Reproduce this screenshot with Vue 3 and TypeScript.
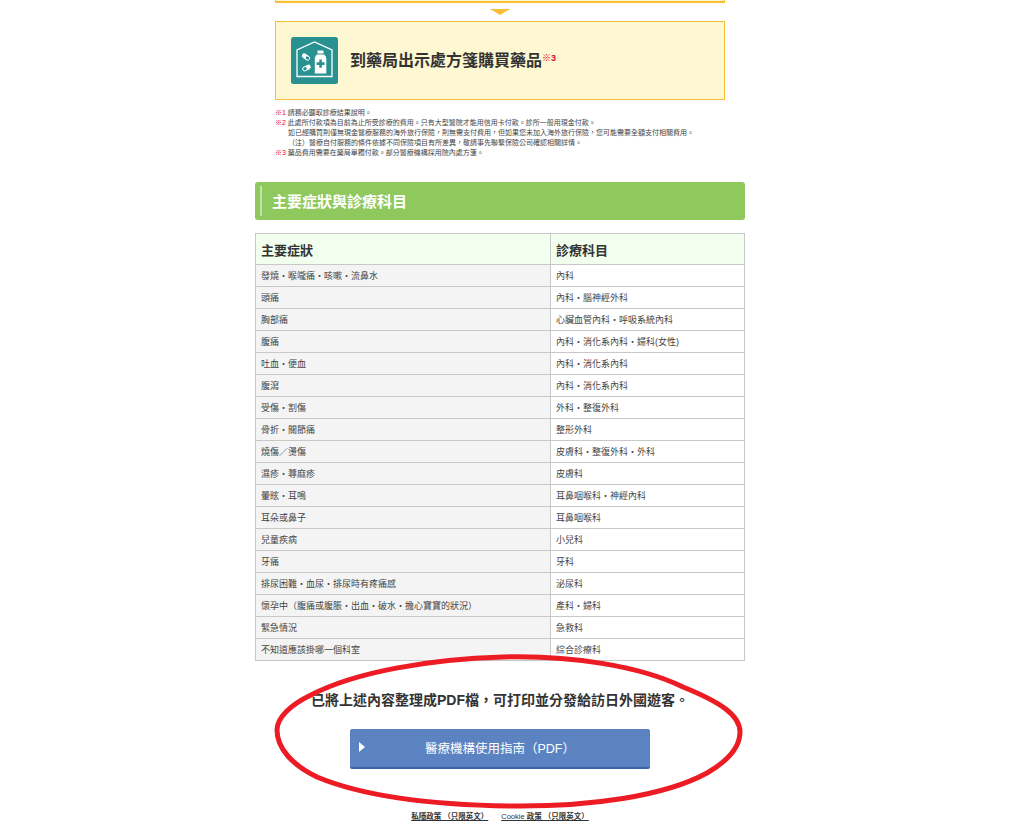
<script setup lang="ts">
interface Row { symptom: string; dept: string }
const rows: Row[] = [
  { symptom: '發燒・喉嚨痛・咳嗽・流鼻水', dept: '內科' },
  { symptom: '頭痛', dept: '內科・腦神經外科' },
  { symptom: '胸部痛', dept: '心臟血管內科・呼吸系統內科' },
  { symptom: '腹痛', dept: '內科・消化系內科・婦科(女性)' },
  { symptom: '吐血・便血', dept: '內科・消化系內科' },
  { symptom: '腹瀉', dept: '內科・消化系內科' },
  { symptom: '受傷・割傷', dept: '外科・整復外科' },
  { symptom: '骨折・關節痛', dept: '整形外科' },
  { symptom: '燒傷／燙傷', dept: '皮膚科・整復外科・外科' },
  { symptom: '濕疹・蕁麻疹', dept: '皮膚科' },
  { symptom: '暈眩・耳鳴', dept: '耳鼻咽喉科・神經內科' },
  { symptom: '耳朵或鼻子', dept: '耳鼻咽喉科' },
  { symptom: '兒童疾病', dept: '小兒科' },
  { symptom: '牙痛', dept: '牙科' },
  { symptom: '排尿困難・血尿・排尿時有疼痛感', dept: '泌尿科' },
  { symptom: '懷孕中（腹痛或腹脹・出血・破水・擔心寶寶的狀況）', dept: '產科・婦科' },
  { symptom: '緊急情況', dept: '急救科' },
  { symptom: '不知道應該掛哪一個科室', dept: '綜合診療科' },
]
</script>

<template>
  <div class="page">
    <main class="content">
      <div class="steps">
        <div class="prev-box"></div>
        <div class="arrow"></div>
        <div class="step-box">
          <svg class="step-icon" width="47" height="47" viewBox="0 0 47 47">
            <rect width="47" height="47" rx="2.5" fill="#2a9191" />
            <path d="M6 39.5V13L23.5 5L41 13V39.5Z" fill="none" stroke="#fff" stroke-width="1.3" />
            <path d="M26.5 13.5H32.5V16.5H26.5Z" fill="#fff" />
            <path d="M26 17.5H33C34.5 19 35.3 20 35.3 22V36.5H23.8V22C23.8 20 24.5 19 26 17.5Z" fill="#fff" />
            <path d="M28.3 22.5H30.9V25.3H33.6V27.9H30.9V30.7H28.3V27.9H25.6V25.3H28.3Z" fill="#2a9191" />
            <g transform="rotate(35 15 20)">
              <rect x="10.5" y="17.6" width="9" height="4.8" rx="2.4" fill="#fff" />
              <rect x="15" y="18.6" width="3.6" height="2.8" rx="1.2" fill="#2a9191" />
            </g>
            <g transform="rotate(-28 15.5 31)">
              <rect x="11" y="28.6" width="9" height="4.8" rx="2.4" fill="#fff" />
              <rect x="12" y="29.6" width="3.6" height="2.8" rx="1.2" fill="#2a9191" />
            </g>
          </svg>
          <p class="step-title">到藥局出示處方箋購買藥品<sup class="mark">※3</sup></p>
        </div>
        <div class="notes">
          <p><span class="mark">※1</span> 請務必聽取診療結果說明。</p>
          <p><span class="mark">※2</span> 此處所付款項為目前為止所受診療的費用。只有大型醫院才能用信用卡付款。診所一般用現金付款。</p>
          <p class="indent">如已經購買則僅無現金醫療服務的海外旅行保險，則無需支付費用，但如果您未加入海外旅行保險，您可能需要全額支付相關費用。</p>
          <p class="indent">（注）醫療自付服務的條件依據不同保險項目有所差異，敬請事先聯繫保險公司確認相關詳情。</p>
          <p><span class="mark">※3</span> 藥品費用需要在藥局單獨付款。部分醫療機構採用院內處方箋。</p>
        </div>
      </div>

      <h2 class="section-title"><span>主要症狀與診療科目</span></h2>

      <table class="table">
        <thead>
          <tr>
            <th class="col-a">主要症狀</th>
            <th>診療科目</th>
          </tr>
        </thead>
        <tbody>
          <tr v-for="r in rows" :key="r.symptom">
            <td class="col-a">{{ r.symptom }}</td>
            <td>{{ r.dept }}</td>
          </tr>
        </tbody>
      </table>

      <p class="pdf-lead">已將上述內容整理成PDF檔，可打印並分發給訪日外國遊客。</p>
      <a class="pdf-btn" href="#">醫療機構使用指南（PDF）</a>

      <footer class="foot">
        <a class="strong" href="#">私隱政策 （只限英文）</a>
        <a href="#">Cookie <span class="strong">政策 （只限英文）</span></a>
      </footer>
    </main>

    <svg class="scribble" width="480" height="164" viewBox="0 0 480 164">
      <path
        d="M233 7C300 5 370 16 413 37C450 52 470 65 470 82C470 98 456 112 437 123C395 146 320 157 240 156C165 155 95 147 47 127C22 115 7 98 7 80C7 68 20 55 41 45C85 22 160 9 233 7Z"
        fill="none" stroke="#ed1c24" stroke-width="5" />
    </svg>
  </div>
</template>

<style>
html, body { margin: 0; overflow: hidden; background: #fff; }
</style>

<style scoped>
.page {
  position: relative;
  width: 1000px;
  height: 824px;
  overflow: hidden;
  font-family: "Liberation Sans", "Noto Sans CJK TC", sans-serif;
  color: #333;
}
.content { width: 490px; margin: 0 auto; }
.steps { padding: 0 20px; }
.prev-box {
  height: 1px;
  border-style: solid;
  border-width: 0 1px 2px;
  border-color: #f9bd36;
  background: #fdf8d2;
}
.arrow {
  width: 0;
  margin: 6px auto;
  border-style: solid;
  border-width: 6px 10px 0;
  border-color: #f9bd36 transparent transparent;
}
.step-box {
  box-sizing: border-box;
  height: 79px;
  display: flex;
  align-items: center;
  padding: 0 15px;
  background: #fdf8d2;
  border: 1px solid #f9bd36;
}
.step-icon { flex: none; margin-right: 12px; }
.step-title {
  margin: 0;
  padding-top: 1px;
  font-size: 16px;
  line-height: 24px;
  font-weight: 700;
  color: #333;
}
.step-title sup {
  font-size: 9px;
  line-height: 0;
  vertical-align: 5px;
  font-weight: 700;
}
.mark { color: #e60033; }
.notes {
  margin-top: 8px;
  font-size: 7px;
  line-height: 10px;
  color: #444;
}
.notes p { margin: 0; white-space: nowrap; }
.notes .indent { padding-left: 13px; }
.section-title {
  box-sizing: border-box;
  height: 38px;
  margin: 24px 0 13px;
  padding: 4px 5px;
  background: #8fc85d;
  border-radius: 3px;
  font-size: 15px;
  font-weight: 700;
  color: #fff;
}
.section-title span {
  display: block;
  height: 30px;
  line-height: 32px;
  padding-left: 10px;
  border-left: 2px solid #c6e3ab;
}
.table {
  width: 490px;
  border-collapse: collapse;
  table-layout: fixed;
  font-size: 9px;
  color: #444;
}
.table th, .table td {
  border: 1px solid #c8c8c8;
  padding: 0 5px;
  text-align: left;
  white-space: nowrap;
}
.table th {
  height: 30px;
  background: #f2ffee;
  font-size: 13px;
  font-weight: 700;
  color: #333;
}
.table td { height: 21px; line-height: 12px; background: #fff; }
.table .col-a { width: 284px; }
.table td.col-a { background: #f4f4f4; }
.pdf-lead {
  margin: 29px 0 0;
  height: 20px;
  line-height: 20px;
  text-align: center;
  font-size: 14px;
  font-weight: 700;
  color: #333;
}
.pdf-btn {
  position: relative;
  box-sizing: border-box;
  display: block;
  width: 300px;
  height: 40px;
  margin: 19px auto 0;
  background: #5b83c2;
  border-bottom: 2px solid #3c62a9;
  border-radius: 2px;
  text-align: center;
  line-height: 40px;
  font-size: 12.5px;
  color: #fff;
  text-decoration: none;
}
.pdf-btn::before {
  content: "";
  position: absolute;
  left: 9px;
  top: 13px;
  border-style: solid;
  border-width: 5px 0 5px 6px;
  border-color: transparent transparent transparent #fff;
}
.foot {
  display: flex;
  justify-content: center;
  gap: 13px;
  margin-top: 43px;
  font-size: 7.5px;
  line-height: 10px;
}
.foot a { color: #333; text-decoration: underline; white-space: nowrap; }
.foot .strong { font-weight: 700; }
.scribble {
  position: absolute;
  left: 270px;
  top: 650px;
  pointer-events: none;
}
</style>
